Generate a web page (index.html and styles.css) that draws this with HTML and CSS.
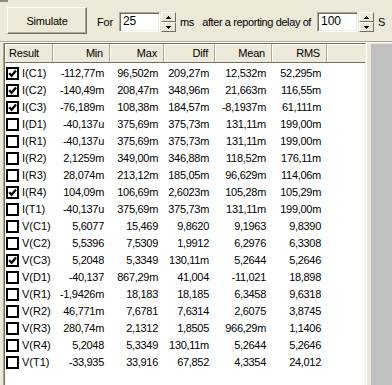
FILE: index.html
```html
<!DOCTYPE html>
<html>
<head>
<meta charset="utf-8">
<link rel="stylesheet" href="styles.css">
</head>
<body>
<div class="window">
  <div class="toolbar">
    <span class="corner"></span>
    <button class="btn">Simulate</button>
    <span class="lbl lbl-for">For</span>
    <div class="spin-field">
      <div class="field">25</div>
      <div class="spin">
        <div class="spin-btn"><svg width="5" height="3" viewBox="0 0 5 3"><path d="M2 0h1v1h1v1h1v1H0V2h1V1h1z" fill="#000"/></svg></div>
        <div class="spin-btn"><svg width="5" height="3" viewBox="0 0 5 3"><path d="M0 0h5v1H4v1H3v1H2V2H1V1H0z" fill="#000"/></svg></div>
      </div>
    </div>
    <span class="lbl lbl-ms">ms</span>
    <span class="lbl lbl-after">after a reporting delay of</span>
    <div class="spin-field spin-field-2">
      <div class="field">100</div>
      <div class="spin">
        <div class="spin-btn"><svg width="5" height="3" viewBox="0 0 5 3"><path d="M2 0h1v1h1v1h1v1H0V2h1V1h1z" fill="#000"/></svg></div>
        <div class="spin-btn"><svg width="5" height="3" viewBox="0 0 5 3"><path d="M0 0h5v1H4v1H3v1H2V2H1V1H0z" fill="#000"/></svg></div>
      </div>
    </div>
    <span class="lbl lbl-s">S</span>
  </div>
  <div class="main">
    <div class="list-outer">
      <div class="list">
        <div class="header grid">
          <div class="hc hc-left">Result</div>
          <div class="hc">Min</div>
          <div class="hc">Max</div>
          <div class="hc">Diff</div>
          <div class="hc">Mean</div>
          <div class="hc">RMS</div>
          <div class="hc hc-fill"></div>
        </div>
        <div class="rows" id="rows"></div>
      </div>
    </div>
    <div class="gap"></div>
    <div class="grey"></div>
  </div>
</div>
<script src="app.js"></script>
</body>
</html>
```

FILE: app.js
```js
const data = [
  ["I(C1)",1,"-112,77m","96,502m","209,27m","12,532m","52,295m"],
  ["I(C2)",1,"-140,49m","208,47m","348,96m","21,663m","116,55m"],
  ["I(C3)",1,"-76,189m","108,38m","184,57m","-8,1937m","61,111m"],
  ["I(D1)",0,"-40,137u","375,69m","375,73m","131,11m","199,00m"],
  ["I(R1)",0,"-40,137u","375,69m","375,73m","131,11m","199,00m"],
  ["I(R2)",0,"2,1259m","349,00m","346,88m","118,52m","176,11m"],
  ["I(R3)",0,"28,074m","213,12m","185,05m","96,629m","114,06m"],
  ["I(R4)",1,"104,09m","106,69m","2,6023m","105,28m","105,29m"],
  ["I(T1)",0,"-40,137u","375,69m","375,73m","131,11m","199,00m"],
  ["V(C1)",0,"5,6077","15,469","9,8620","9,1963","9,8390"],
  ["V(C2)",0,"5,5396","7,5309","1,9912","6,2976","6,3308"],
  ["V(C3)",1,"5,2048","5,3349","130,11m","5,2644","5,2646"],
  ["V(D1)",0,"-40,137","867,29m","41,004","-11,021","18,898"],
  ["V(R1)",0,"-1,9426m","18,183","18,185","6,3458","9,6318"],
  ["V(R2)",0,"46,771m","7,6781","7,6314","2,6075","3,8745"],
  ["V(R3)",0,"280,74m","2,1312","1,8505","966,29m","1,1406"],
  ["V(R4)",0,"5,2048","5,3349","130,11m","5,2644","5,2646"],
  ["V(T1)",0,"-33,935","33,916","67,852","4,3354","24,012"]
];
const box = '<svg class="cb" width="13" height="13" viewBox="0 0 13 13"><rect x="1" y="1" width="11" height="11" fill="#fff" stroke="#000" stroke-width="2"/>';
const tick = '<path d="M3.2 6.2 L5.6 8.8 L10 3.6" fill="none" stroke="#000" stroke-width="2.3"/>';
const rows = document.getElementById('rows');
rows.innerHTML = data.map(r =>
  '<div class="row grid"><div class="c c-name">' + box + (r[1] ? tick : '') + '</svg><span>' + r[0] + '</span></div>' +
  r.slice(2).map(v => '<div class="c num">' + v + '</div>').join('') +
  '<div class="c"></div></div>'
).join('');
```

FILE: styles.css
```css
html, body {
  margin: 0;
  padding: 0;
  width: 392px;
  height: 385px;
  overflow: hidden;
  background: #ECE9D8;
}
.window {
  width: 392px;
  height: 385px;
  display: flex;
  flex-direction: column;
  font-family: "Liberation Sans", Arial, sans-serif;
  font-size: 11px;
  color: #000;
  background: #ECE9D8;
  position: relative;
}
.toolbar {
  height: 41px;
  flex: none;
  display: flex;
  align-items: flex-start;
  padding-left: 7px;
  border-bottom: 1px solid #ACA899;
  box-sizing: content-box;
  position: relative;
}
.corner {
  position: absolute;
  left: 0;
  top: 0;
  width: 8px;
  height: 2px;
  background: #8a8a80;
}
.btn {
  margin-top: 7px;
  width: 80px;
  height: 27px;
  padding: 0;
  background: #ECE9D8;
  border: 1px solid;
  border-color: #fff #716F64 #716F64 #fff;
  box-shadow: inset -1px -1px 0 #ACA899;
  font-family: inherit;
  font-size: 11px;
  letter-spacing: -0.2px;
  color: #000;
}
.lbl {
  margin-top: 12px;
  line-height: 20px;
  letter-spacing: -0.2px;
  white-space: nowrap;
}
.lbl-for { margin-left: 10px; }
.lbl-ms { margin-left: 4px; }
.lbl-after { margin-left: 8px; letter-spacing: -0.4px; }
.lbl-s { margin-left: 4px; }
.spin-field {
  margin-top: 12px;
  margin-left: 6px;
  display: flex;
  height: 20px;
}
.spin-field-2 { margin-left: 6px; }
.field {
  width: 41px;
  height: 20px;
  box-sizing: border-box;
  background: #fff;
  border: 1px solid;
  border-color: #ACA899 #fff #fff #ACA899;
  box-shadow: inset 1px 1px 0 #716F64, inset -1px -1px 0 #F1EFE2;
  padding-left: 3px;
  line-height: 17px;
  font-size: 12px;
}
.spin {
  width: 15px;
  height: 20px;
  margin-left: 1px;
  display: flex;
  flex-direction: column;
}
.spin-btn {
  flex: 1;
  box-sizing: border-box;
  background: #ECE9D8;
  border: 1px solid;
  border-color: #fff #716F64 #716F64 #fff;
  display: flex;
  align-items: center;
  justify-content: center;
}
.spin-btn svg { display: block; }
.main {
  flex: 1;
  display: flex;
  border-top: 1px solid #fff;
  padding-left: 3px;
  min-height: 0;
}
.list-outer {
  width: 364px;
  flex: none;
  box-sizing: border-box;
  border-left: 1px solid #ACA899;
  border-right: 1px solid #fff;
  display: flex;
}
.list {
  flex: 1;
  background: #fff;
  border-top: 1px solid #716F64;
  border-left: 1px solid #716F64;
  border-right: 1px solid #F1EFE2;
  overflow: hidden;
}
.grid {
  display: grid;
  grid-template-columns: 48px 57px 54px 51px 57px 55px 1fr;
}
.header {
  height: 19px;
  background: #ECE9D8;
  border-bottom: 1px solid #716F64;
  box-sizing: border-box;
}
.hc {
  text-align: right;
  padding-right: 6px;
  line-height: 18px;
  border-right: 1px solid #ACA899;
  box-shadow: inset 1px 1px 0 #fff;
  letter-spacing: -0.2px;
}
.hc-left { text-align: left; padding-left: 4px; }
.hc-fill { border-right: none; }
.rows { padding-top: 2px; }
.row { height: 17px; }
.c {
  line-height: 17px;
  white-space: nowrap;
  letter-spacing: -0.3px;
}
.num { text-align: right; padding-right: 6px; }
.c-name {
  display: flex;
  align-items: center;
  padding-left: 1px;
  letter-spacing: 0;
}
.cb { display: block; flex: none; margin-right: 3px; }
.gap { width: 4px; flex: none; }
.grey {
  flex: 1;
  background: #C0C0C0;
  margin-top: 1px;
}
```
